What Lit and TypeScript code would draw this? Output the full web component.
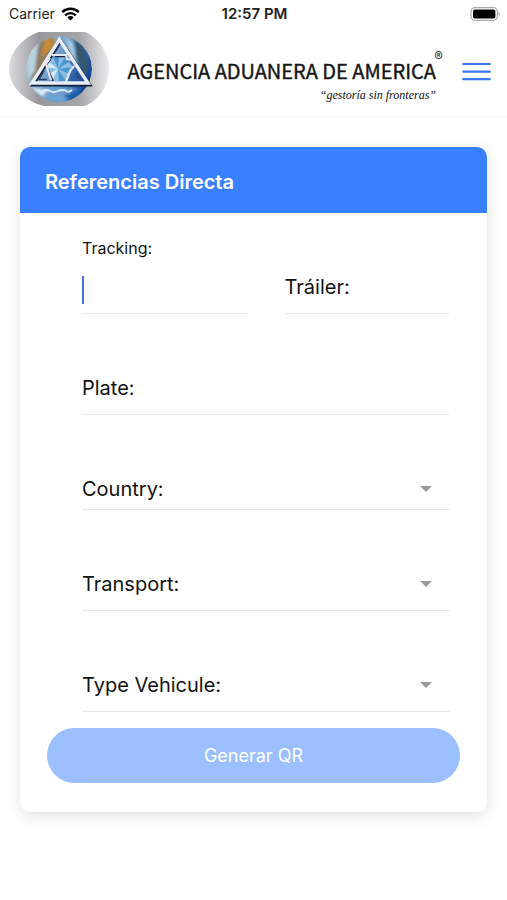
import { LitElement, html, css } from "lit";
import { customElement, property } from "lit/decorators.js";

const sans = css`Inter, "Liberation Sans", sans-serif`;

@customElement("status-bar")
class StatusBar extends LitElement {
  static styles = css`
    :host {
      display: grid;
      grid-template-columns: 1fr auto 1fr;
      align-items: center;
      height: 28px;
      padding: 0 7px 0 9px;
      font: 500 14px/20px ${sans};
      color: #222;
    }
    .carrier { display: flex; align-items: center; gap: 6px; font-weight: 400; }
    .time { font-size: 15px; font-weight: 600; }
    .battery { justify-self: end; display: block; }
  `;
  render() {
    return html`
      <div class="carrier">
        <span>Carrier</span>
        <svg width="19" height="14" viewBox="0 0 19 14" aria-label="Wi-Fi">
          <g fill="none" stroke="#000" stroke-width="2.4">
            <path d="M1.2 5.2a11.8 11.8 0 0 1 16.6 0" />
            <path d="M4.2 8.3a7.5 7.5 0 0 1 10.6 0" />
          </g>
          <path d="M9.5 13.6 6.3 10.4a4.6 4.6 0 0 1 6.4 0z" />
        </svg>
      </div>
      <span class="time">12:57 PM</span>
      <svg class="battery" width="30" height="14" viewBox="0 0 30 14" aria-label="Battery full">
        <rect x="1" y=".7" width="26.4" height="12.6" rx="4" fill="#fff" stroke="#a9a9a9" stroke-width="1.2" />
        <rect x="3" y="2.6" width="22.4" height="8.8" rx="2" fill="#000" />
        <path d="M28.6 4.8c1.6.8 1.6 3.6 0 4.4z" fill="#a9a9a9" />
      </svg>
    `;
  }
}

@customElement("site-header")
class SiteHeader extends LitElement {
  static styles = css`
    :host {
      display: flex;
      align-items: center;
      height: 88px;
      padding: 0 16px 0 8px;
      border-bottom: 1px solid #f1f1f1;
    }
    .logo { display: block; flex: none; margin-bottom: 7px; }
    .brand {
      position: relative;
      display: flex;
      flex-direction: column;
      margin-left: auto;
      margin-top: 18px;
      color: #161616;
      white-space: nowrap;
    }
    .name {
      margin: 0;
      font: 400 20px/28px "Noto Sans CJK SC", "Noto Sans", sans-serif;
      -webkit-text-stroke: 0.4px #161616;
    }
    .tag { margin: 0; align-self: flex-end; font: italic 12px/20px "Liberation Serif", serif; color: #111; }
    .mark { position: absolute; right: -7px; top: -9px; font: 700 13px/16px ${sans}; color: #444; }
    .menu {
      flex: none;
      margin-left: 26px;
      padding: 0;
      border: 0;
      background: none;
      cursor: pointer;
    }
    .menu svg { display: block; }
  `;
  render() {
    return html`
      <svg class="logo" width="102" height="76" viewBox="0 0 102 76" role="img" aria-label="Agencia Aduanera de America">
        <defs>
          <linearGradient id="plate">
            <stop offset="0" stop-color="#dcdce0" />
            <stop offset=".3" stop-color="#97979c" />
            <stop offset=".7" stop-color="#a5a5a9" />
            <stop offset="1" stop-color="#ececee" />
          </linearGradient>
          <linearGradient id="globe" x1="0" y1=".2" x2="1" y2=".7">
            <stop offset="0" stop-color="#c3d5df" />
            <stop offset=".45" stop-color="#6f9dc8" />
            <stop offset=".75" stop-color="#2d61a6" />
            <stop offset="1" stop-color="#0d3c8c" />
          </linearGradient>
          <clipPath id="disc"><circle cx="51" cy="38" r="33" /></clipPath>
          <filter id="soft"><feGaussianBlur stdDeviation="1.5" /></filter>
        </defs>
        <path d="M31 1H77C91 7 101 22 101 38S91 69 77 75H36C18 71 1 56 1 38S16 6 31 1z" fill="url(#plate)" />
        <g clip-path="url(#disc)">
          <circle cx="51" cy="38" r="33" fill="url(#globe)" />
          <g filter="url(#soft)">
            <path d="M32 10 46 5 48 14 32 42 23 52 26 27z" fill="#8c7a64" />
            <path d="M37 9 46 7 45 15 33 28z" fill="#c98b2d" />
            <path d="M22 20 30 12 27 40 20 48z" fill="#b9d5de" />
            <path d="M57 5 65 12 70 33 62 22z" fill="#a9cde6" />
            <path d="M66 7 76 17 81 36 78 44 68 28z" fill="#34556f" />
            <path d="M26 58 47 55 72 58 55 74 35 70z" fill="#6ba3d4" />
            <path d="M22 56 40 60 34 65z" fill="#e5f3f8" />
            <path d="M56 62 74 57 69 66 58 68z" fill="#1f60b5" />
          </g>
          <path d="M45 26H57L65 36 58 50H44L37 36z" fill="#8abde1" />
          <path d="M50 38 45 26H51zM50 38 57 26 61 31zM50 38 65 36 62 43zM50 38 58 50H51z" fill="#4c96d2" />
          <path d="M50 38 37 36 41 31zM50 38 44 50 40 43z" fill="#d4eaf5" />
        </g>
        <g fill="none">
          <path d="M53 10 82 54H25z" stroke="#16213c" stroke-width="3" />
          <path d="M47 25.5H58M40 38 45 50" stroke="#16213c" stroke-width="1.6" />
          <path d="M51.5 8.5 80 52H24z" stroke="#e9edf5" stroke-width="3.4" />
          <path d="M44 24H58L59 28L65 29M42 27 38 33 43 49M66 35 62 40 58 51" stroke="#e2e7f0" stroke-width="2.2" />
          <path d="M51.5 13.5 47.5 20.5M36 40 31 48.5H39M68 42 71 47" stroke="#28406f" stroke-width="1.4" />
        </g>
        <path d="M35 60q4-2 7 0t8 0 8 0 6-1" fill="none" stroke="#dcebf4" stroke-width="1.8" />
        <path d="M37 63H63" stroke="#8b98ad" stroke-width="1" />
      </svg>
      <div class="brand">
        <p class="name">AGENCIA ADUANERA DE AMERICA</p>
        <p class="tag">“gestoría sin fronteras”</p>
        <span class="mark">®</span>
      </div>
      <button class="menu" type="button" aria-label="Menu">
        <svg width="29" height="20" viewBox="0 0 29 20">
          <path d="M1.2 2H27.8M1.2 9.7H27.8M1.2 17.2H27.8" stroke="#3a78f2" stroke-width="2.2" stroke-linecap="round" />
        </svg>
      </button>
    `;
  }
}

@customElement("form-field")
class FormField extends LitElement {
  @property() label = "";
  @property() kind: "text" | "select" = "text";
  @property({ type: Boolean, reflect: true }) active = false;
  @property({ type: Boolean, reflect: true }) compact = false;

  static styles = css`
    :host { display: block; min-width: 0; font-family: ${sans}; color: #111; }
    :host([compact]) { padding-top: 6px; }
    .box { position: relative; display: grid; }
    .label {
      grid-area: 1 / 1;
      align-self: center;
      z-index: 1;
      font-size: 20px;
      line-height: 24px;
      pointer-events: none;
    }
    .control {
      grid-area: 1 / 1;
      box-sizing: border-box;
      width: 100%;
      height: 55px;
      margin: 0;
      padding: 0;
      border: 0;
      border-bottom: 1px solid #e6e6e6;
      border-radius: 0;
      background: none;
      font: 400 20px/24px ${sans};
      color: #111;
      outline: none;
      appearance: none;
    }
    .arrow { grid-area: 1 / 1; place-self: center end; margin-right: 18px; pointer-events: none; }
    .caret { position: absolute; left: 0; top: 39px; width: 2px; height: 28px; background: #4a6fe0; }
    :host([compact]) .control { height: 43px; }
    :host([active]) .box { grid-template-rows: 22px auto; }
    :host([active]) .label { font-size: 16px; line-height: 22px; }
    :host([active]) .control { grid-area: 2 / 1; }
  `;
  render() {
    return html`
      <div class="box">
        <label class="label" for="control">${this.label}</label>
        ${this.kind === "select"
          ? html`
              <select class="control" id="control"><option value=""></option></select>
              <svg class="arrow" width="12" height="6" viewBox="0 0 12 6"><path d="M0 0H12L6 6z" fill="#999" /></svg>
            `
          : html`<input class="control" id="control" type="text" />`}
        ${this.active ? html`<span class="caret"></span>` : ""}
      </div>
    `;
  }
}

@customElement("app-root")
class AppRoot extends LitElement {
  static styles = css`
    :host { display: block; min-height: 100vh; background: #fff; font-family: ${sans}; }
    .card {
      margin: 30px 20px 0;
      border-radius: 10px;
      background: #fff;
      box-shadow: 0 4px 16px rgba(0, 0, 0, 0.12);
    }
    .title {
      margin: 0;
      padding: 23px 25px 19px;
      border-radius: 10px 10px 0 0;
      background: #3880ff;
      color: #fff;
      font-size: 20px;
      font-weight: 600;
      line-height: 24px;
    }
    .form { padding: 24px 27px 29px; }
    .fields { display: flex; flex-direction: column; gap: 46px; padding: 0 10px 0 35px; }
    .pair { display: grid; grid-template-columns: 1fr 1fr; gap: 37px; align-items: end; }
    .submit {
      display: block;
      width: 100%;
      height: 55px;
      margin-top: 16px;
      padding: 0;
      border: 0;
      border-radius: 28px;
      background: #9bbfff;
      color: #fff;
      font: 400 18px/24px ${sans};
    }
  `;
  render() {
    return html`
      <status-bar></status-bar>
      <site-header></site-header>
      <main class="card">
        <h1 class="title">Referencias Directa</h1>
        <form class="form">
          <div class="fields">
            <div class="pair">
              <form-field label="Tracking:" active></form-field>
              <form-field label="Tráiler:"></form-field>
            </div>
            <form-field label="Plate:"></form-field>
            <form-field label="Country:" kind="select" compact></form-field>
            <form-field label="Transport:" kind="select"></form-field>
            <form-field label="Type Vehicule:" kind="select"></form-field>
          </div>
          <button class="submit" type="submit" disabled>Generar QR</button>
        </form>
      </main>
    `;
  }
}
